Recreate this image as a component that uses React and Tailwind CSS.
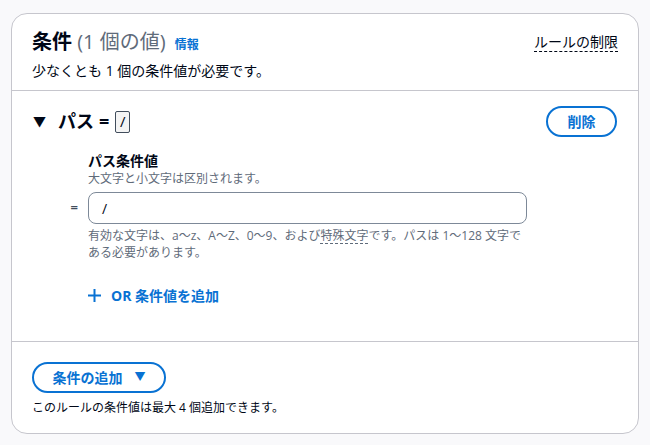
const font = { fontFamily: '"Open Sans", "Noto Sans CJK JP", sans-serif' }

const App = () => {
  return (
    <div className="w-[650px] h-[445px] bg-[#f9f9fb] pt-[13px] px-[11px]" style={font}>
      <div className="h-[421px] bg-white border border-[#c6c6cd] rounded-[16px] flex flex-col text-[#000716]">
        {/* Header */}
        <div className="h-[77px] px-5 pt-[14px] border-b border-[#c6c6cd]">
          <div className="flex items-start justify-between">
            <div className="flex items-baseline gap-[9px]">
              <h2 className="text-[20px] leading-[28px] font-bold">
                条件 <span className="font-normal text-[#5f6b7a]">(1 個の値)</span>
              </h2>
              <span className="text-[12px] font-bold text-[#0972d3]">情報</span>
            </div>
            <span className="text-[14px] leading-[18px] mt-[5px] border-b border-dashed border-[#000716]">
              ルールの制限
            </span>
          </div>
          <p className="text-[14px] leading-[20px] mt-[5px] text-[#000716]">少なくとも 1 個の条件値が必要です。</p>
        </div>

        {/* Path condition */}
        <div className="h-[251px] border-b border-[#c6c6cd] pl-5 pr-[21px] pt-[15px]">
          <div className="flex items-center justify-between">
            <div className="flex items-center font-bold text-[18px]">
              <span className="text-[13px] w-[13px] ml-[1px] mr-[12px]">▼</span>
              <span>パス</span>
              <span className="ml-[5px] mr-[6px]">=</span>
              <span className="inline-flex items-center justify-center w-[15px] h-[22px] border border-[#414d5c] rounded-[2px] bg-[#f4f4f4] font-normal text-[15px]">/</span>
            </div>
            <button className="w-[71px] h-[31px] rounded-full border-2 border-[#0972d3] text-[#0972d3] font-bold text-[14px]">
              削除
            </button>
          </div>

          <div className="ml-[56px] mt-[14px]">
            <div className="text-[14px] font-bold leading-[20px]">パス条件値</div>
            <div className="text-[12px] leading-[16px] text-[#5f6b7a]">大文字と小文字は区別されます。</div>
          </div>
          <div className="flex items-center mt-[5px]">
            <span className="w-[56px] text-right pr-[10px] text-[13px] font-bold text-[#414d5c]">=</span>
            <div className="w-[439px] h-[32px] border border-[#7d8998] rounded-[8px] flex items-center pl-[13px] text-[14px]">
              /
            </div>
          </div>
          <p className="ml-[56px] mt-[3px] w-[440px] text-[12px] leading-[17px] text-[#5f6b7a]">
            有効な文字は、a〜z、A〜Z、0〜9、および<span className="underline decoration-dashed underline-offset-[3px]">特殊文字</span>です。パスは 1〜128 文字である必要があります。
          </p>
          <button className="ml-[56px] mt-[24px] flex items-center gap-[10px] text-[#0972d3] font-bold text-[14px]">
            <svg width="13" height="13" viewBox="0 0 13 13" fill="none" stroke="currentColor" strokeWidth="2">
              <path d="M6.5 0v13M0 6.5h13" />
            </svg>
            OR 条件値を追加
          </button>
        </div>

        {/* Footer */}
        <div className="px-5 pt-[20px]">
          <button className="w-[134px] h-[31px] rounded-full border-2 border-[#0972d3] text-[#0972d3] font-bold text-[14px] flex items-center justify-center gap-[12px]">
            条件の追加
            <span className="text-[11px]">▼</span>
          </button>
          <p className="text-[12px] leading-[16px] mt-[7px] text-[#000716]">このルールの条件値は最大 4 個追加できます。</p>
        </div>
      </div>
    </div>
  )
}

export default App
